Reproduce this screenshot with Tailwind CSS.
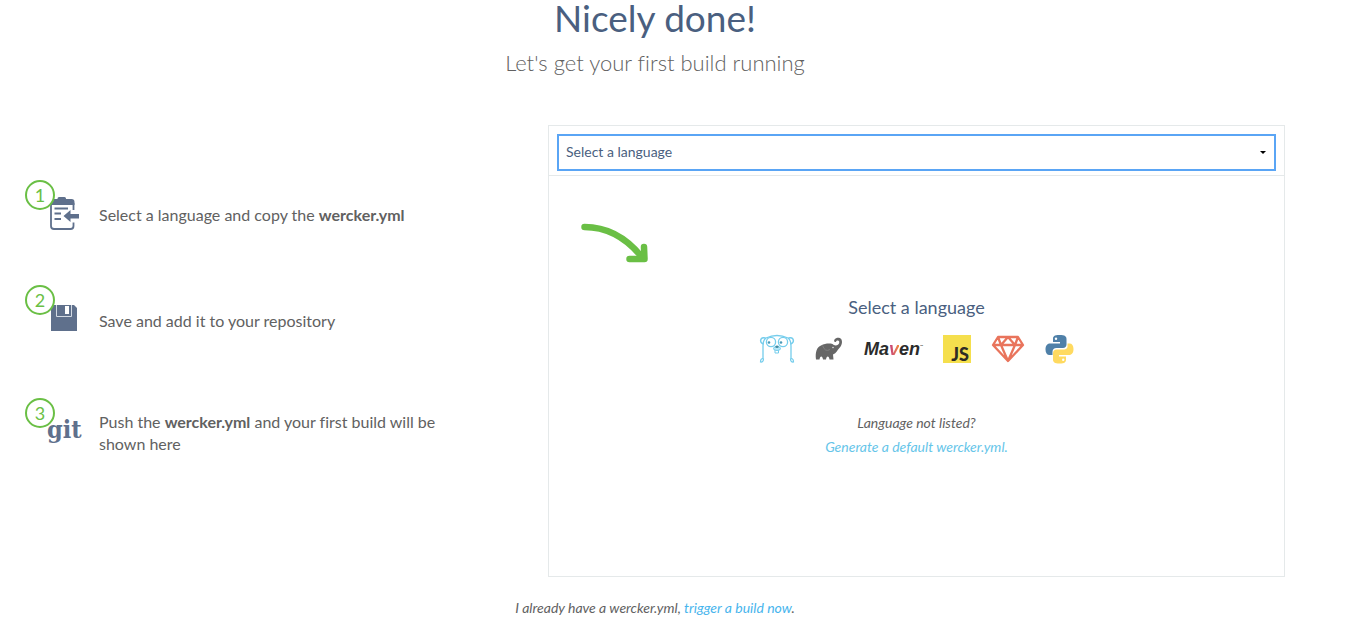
<!DOCTYPE html>
<html lang="en">
<head>
<meta charset="utf-8">
<meta name="viewport" content="width=device-width, initial-scale=1">
<title>First build</title>
<script src="https://cdn.jsdelivr.net/npm/@tailwindcss/browser@4"></script>
</head>
<body class="bg-white font-['Lato',sans-serif] text-base text-[#616161] [font-variant-ligatures:none]">
<main class="pr-[76px] pl-[25px]">
  <header class="text-center">
    <h1 class="text-[37px] leading-9 text-[#4a5f80]">Nicely done!</h1>
    <p class="mt-3 text-[22px] leading-[30px] font-light">Let's get your first build running</p>
  </header>

  <div class="mt-[47px] flex">
    <ol class="w-[523px] shrink-0 pt-[55px] leading-[22px]">
      <li class="mb-[35px] flex min-h-[70px] items-center gap-[18px]">
        <div class="relative h-[70px] w-14 shrink-0">
          <svg class="absolute top-4 left-6" width="32" height="36" viewBox="0 0 32 36" fill="none" aria-hidden="true">
            <path d="M2 7V30a3 3 0 0 0 3 3H21.500a3 3 0 0 0 3-3V26.500M24.500 14V7" stroke="#5f708c" stroke-width="1.800"/>
            <path d="M1 9V6q0-3 3-3H8.500V2.500q0-1.500 1.500-1.500H15.500q1.500 0 1.500 1.500V3H22.500q3 0 3 3V9z" fill="#5f708c"/>
            <path d="M5.500 12.500H19M5.500 17.500H12M5.500 23H12" stroke="#5f708c" stroke-width="1.800"/>
            <path d="M14.500 20L21.500 14V18H30V22.500H21.500V26z" fill="#5f708c"/>
          </svg>
          <span class="absolute top-0 left-0 flex size-[30px] items-center justify-center rounded-full border-2 border-[#6abf45] bg-white text-lg leading-6 text-[#6abf45]">1</span>
        </div>
        <p>Select a language and copy the <strong>wercker.yml</strong></p>
      </li>
      <li class="mb-[41px] flex min-h-[72px] items-center gap-[18px]">
        <div class="relative h-[72px] w-14 shrink-0">
          <svg class="absolute top-5 left-[26px]" width="26" height="26" viewBox="0 0 26 26" fill="none" aria-hidden="true">
            <path d="M0 0H23L26 3V26H0z" fill="#5f708c"/>
            <path d="M5.500 0V11.500H20.500V0" stroke="#d3dae3"/>
            <path d="M14 1H18V9H14z" fill="#fff"/>
          </svg>
          <span class="absolute top-0 left-0 flex size-[30px] items-center justify-center rounded-full border-2 border-[#6abf45] bg-white text-lg leading-6 text-[#6abf45]">2</span>
        </div>
        <p>Save and add it to your repository</p>
      </li>
      <li class="flex min-h-[70px] items-center gap-[18px]">
        <div class="relative h-[70px] w-14 shrink-0">
          <span class="absolute top-4 left-[22px] font-['DejaVu_Serif_Condensed','DejaVu_Serif',serif] text-[25px] leading-8 font-bold text-[#5f708c]">git</span>
          <span class="absolute top-0 left-0 flex size-[30px] items-center justify-center rounded-full border-2 border-[#6abf45] bg-white text-lg leading-6 text-[#6abf45]">3</span>
        </div>
        <p class="max-w-[370px]">Push the <strong>wercker.yml</strong> and your first build will be shown here</p>
      </li>
    </ol>

    <section class="min-w-0 flex-1 border border-[#e5e9ea]">
      <div class="relative border-b border-[#e5e9ea] px-2 pt-2 pb-1">
        <label for="language" class="sr-only">Language</label>
        <select id="language" class="block h-[37px] w-full appearance-none border-2 border-[#5aa5f5] bg-white px-[7px] pb-0.5 text-sm text-[#4a5f80] outline-none">
          <option>Select a language</option>
          <option>Go</option><option>Gradle</option><option>Maven</option>
          <option>JavaScript</option><option>Ruby</option><option>Python</option>
        </select>
        <svg class="pointer-events-none absolute top-[25px] right-[18px]" width="6" height="3" viewBox="0 0 6 3" aria-hidden="true"><path d="M0 0H6L3 3z"/></svg>
      </div>
      <div class="flex flex-col items-center pt-[45px] pb-[117px]">
        <svg class="ml-[30px] self-start" width="72" height="44" viewBox="0 0 72 44" fill="none" aria-hidden="true">
          <path d="M5.500 6Q38 6 62 35" stroke="#6abf45" stroke-width="6.500" stroke-linecap="round"/>
          <path d="M50.500 38H65.500L65 26" stroke="#6abf45" stroke-width="6.500" stroke-linecap="round" stroke-linejoin="round"/>
        </svg>
        <h2 class="mt-[30px] text-lg leading-6 text-[#4a5f80]">Select a language</h2>
        <div class="mt-[15px] flex items-center">
          <button type="button" aria-label="Go">
            <svg width="36" height="30" viewBox="0 0 36 30" fill="none" stroke="#75cdec" aria-hidden="true">
              <path d="M4 25V12Q4 6 7 4Q18-1 29 4Q32 6 32 12V25" stroke-width="1.300"/>
              <path d="M4.500 10C0 9 1 2 6.500 4M31.500 10c4.500-1 3.500-8-2-6" stroke-width="1.500"/>
              <circle cx="12" cy="8" r="4.600" fill="#fff" stroke-width="1.300"/><circle cx="24" cy="8" r="4.600" fill="#fff" stroke-width="1.300"/>
              <circle cx="10" cy="8.500" r="1.300" fill="#4a9ab8" stroke="none"/><circle cx="22" cy="8.500" r="1.300" fill="#4a9ab8" stroke="none"/>
              <path d="M16 15.500V19h3.500v-3.500" fill="#fff"/>
              <ellipse cx="18" cy="14.500" rx="3.500" ry="2" fill="#b9e7f7"/>
              <ellipse cx="18" cy="12.800" rx="1.700" ry="1.200" fill="#438ba3" stroke="none"/>
              <path d="M4 24.500q-2.500 0-2.500 3.500q3 .500 3-3.500M32 24.500q2.500 0 2.500 3.500q-3 .500-3-3.500" stroke-width="1.200"/>
            </svg>
          </button>
          <button type="button" aria-label="Gradle" class="ml-5">
            <svg width="28" height="24" viewBox="0 0 28 24" fill="none" aria-hidden="true">
              <path d="M1 22.500C0 15 2 10 6 8.500C10 6.500 14 6 17.500 7C19.500 9.500 24.500 8.500 24.300 5C24 3 21.500 3 21 4.800C19.500 5.800 18.500 4 19.500 2.500C21 .200 24.500 0 26.200 2C28 5 26.500 9 24 11.500C22.500 13 21.500 16 18 17.500L18.500 22.500H14.500C14 18.500 11.500 18.500 11 22.500H8C7.500 18.500 5 18.500 4.500 22.500z" fill="#666"/>
              <path d="M7.500 8.500Q10 15.500 15 12.500" stroke="#858585" stroke-width=".8"/>
              <circle cx="18" cy="10.500" r=".8" fill="#ddd"/>
            </svg>
          </button>
          <button type="button" aria-label="Maven" class="ml-[21px] flex items-start font-['Liberation_Sans',sans-serif] text-lg leading-6 font-bold text-[#2b2b2b] italic"><span>Ma<span class="bg-linear-to-r from-[#c0307c] to-[#f08a35] bg-clip-text text-transparent">v</span>en</span><span class="text-[2px] leading-4">TM</span></button>
          <button type="button" aria-label="JavaScript" class="ml-5 flex size-7 items-end justify-end bg-[#f5df4d] pr-0.5 font-['Lato',sans-serif] text-lg leading-[18px] font-black text-[#2d2d25]">JS</button>
          <button type="button" aria-label="Ruby" class="ml-5">
            <svg width="34" height="28" viewBox="0 0 34 28" fill="none" stroke="#e9745c" stroke-width="2.300" stroke-linejoin="round" aria-hidden="true">
              <path d="M7 2H27L32 10L17 26L2 10zM2 10H32M7 2L10 10L17 26L24 10L27 2M10 10L17 2L24 10"/>
            </svg>
          </button>
          <button type="button" aria-label="Python" class="ml-5">
            <svg width="29" height="30" viewBox="0 0 29 30" aria-hidden="true">
              <path d="M14.500 1C9 1 8 2.500 8 5V8H15V9.500H5C2 9.500.500 12 .500 15.500S2 21 4.500 21H7.500V18C7.500 15.500 9 14 11.500 14H18C20 14 21.500 12.500 21.500 10.500V5C21.500 2.500 20 1 14.500 1z" fill="#4f80a8"/>
              <path d="M14.500 29.500C20 29.500 21 28 21 25.500V22.500H14V21H24C27 21 28.500 18.500 28.500 15S27 9.500 24.500 9.500H22.500V12.500C22.500 15 20 15.500 17.500 15.500H11.500C9.500 15.500 8 17 8 19V25.500C8 28 9.500 29.500 14.500 29.500z" fill="#ffda60"/>
              <circle cx="11" cy="4.700" r="1.200" fill="#fff"/><circle cx="18.200" cy="25.800" r="1.200" fill="#fff"/>
            </svg>
          </button>
        </div>
        <p class="mt-[47px] text-center text-sm leading-6 italic">Language not listed?<br><a href="#" class="text-[#66c5e9]">Generate a default wercker.yml.</a></p>
      </div>
    </section>
  </div>

  <p class="mt-[19px] text-center text-sm leading-6 italic">I already have a wercker.yml, <a href="#" class="text-[#48b5ed]">trigger a build now</a>.</p>
</main>
</body>
</html>
